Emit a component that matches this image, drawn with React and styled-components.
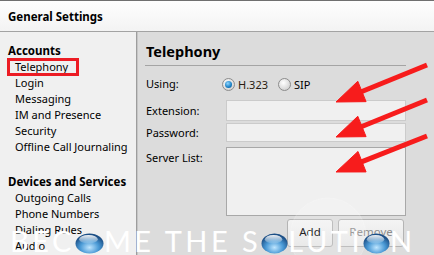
import React from 'react'
import styled, { createGlobalStyle } from 'styled-components'

const GlobalStyle = createGlobalStyle`
  html, body {
    margin: 0;
    padding: 0;
    background: #f0f0f0;
    overflow: hidden;
  }
  body {
    font-family: "Noto Sans", "Open Sans", sans-serif;
    font-size: 11px;
    color: #000;
  }
`

const Window = styled.div`
  position: relative;
  width: 434px;
  height: 255px;
  overflow: hidden;
  display: flex;
  flex-direction: column;
  background: #f0f0f0;
`

const TitleBar = styled.div`
  height: 30px;
  flex-shrink: 0;
  border-top: 1px solid #707070;
  border-bottom: 1px solid #a3a3a3;
  background: linear-gradient(#fefefe, #f3f3f3);
  display: flex;
  align-items: center;
  padding-left: 8px;
  font-weight: bold;
  font-size: 11.5px;
`

const Body = styled.div`
  flex: 1;
  display: flex;
  min-height: 0;
`

const Sidebar = styled.div`
  width: 136px;
  flex-shrink: 0;
  background: #f0f0f0;
  border-right: 1px solid #9d9d9d;
  padding-top: 11px;
  display: flex;
  flex-direction: column;
  gap: 19px;
`

const Group = styled.div`
  display: flex;
  flex-direction: column;
`

const GroupTitle = styled.div`
  font-weight: bold;
  font-size: 11.5px;
  line-height: 16px;
  padding-left: 8px;
`

const NavItem = styled.div`
  position: relative;
  line-height: 16px;
  padding-left: 15px;
  white-space: nowrap;
  ${({ $marked }) => $marked && `
    &::after {
      content: '';
      position: absolute;
      left: 7px;
      top: -1px;
      width: 66px;
      height: 12px;
      border: 3px solid #ec1c24;
    }
  `}
`

const Panel = styled.div`
  flex: 1;
  background: #dcdcdc;
  border-left: 1px solid #c6c6c6;
  padding-left: 7px;
`

const PanelHeader = styled.div`
  padding-top: 9px;
  height: 24px;
  line-height: 20px;
  font-size: 14.5px;
  font-weight: bold;
  padding-left: 1px;
  border-bottom: 1px solid #a4a4a4;
  width: 260px;
`

const Form = styled.div`
  display: grid;
  grid-template-columns: 80px 180px;
  padding-left: 1px;
  margin-top: 8px;
`

const Label = styled.div`
  line-height: 16px;
  margin-top: ${({ $mt }) => $mt || 0}px;
  align-self: ${({ $top }) => ($top ? 'start' : 'center')};
  padding-top: ${({ $pt }) => $pt || 0}px;
`

const RadioRow = styled.div`
  height: 20px;
  margin-left: -4px;
  display: flex;
  align-items: center;
  gap: 3px;
`

const RadioLabel = styled.span`
  margin-right: 7px;
  color: ${({ $dark }) => ($dark ? '#2a1c10' : '#000')};
`

const Radio = styled.span`
  width: 11px;
  height: 11px;
  border-radius: 50%;
  border: 1px solid #8c8c8c;
  background: radial-gradient(circle at 40% 35%, #ffffff, #d6d6d6 70%, #c4c4c4);
  display: inline-flex;
  align-items: center;
  justify-content: center;
  &::after {
    content: '';
    display: ${({ $checked }) => ($checked ? 'block' : 'none')};
    width: 7px;
    height: 7px;
    border-radius: 50%;
    background: radial-gradient(circle at 40% 35%, #8fd6ff, #1a7fc4 60%, #0d4f86);
  }
`

const Input = styled.div`
  height: ${({ $h }) => $h}px;
  margin-top: ${({ $mt }) => $mt || 0}px;
  box-sizing: border-box;
  background: #f0f0f0;
  border: 1px solid ${({ $dark }) => ($dark ? '#a8a8a8' : '#cbcbcb')};
`

const Buttons = styled.div`
  grid-column: 2;
  display: flex;
  justify-content: flex-end;
  gap: 5px;
  margin-top: 3px;
  padding-right: 2px;
`

const Button = styled.div`
  width: ${({ $w }) => $w}px;
  height: 28px;
  box-sizing: border-box;
  border: 1px solid #b4b4b4;
  border-radius: 3px;
  background: linear-gradient(#f4f4f4, #e6e6e6);
  display: flex;
  justify-content: center;
  padding-top: 4px;
  font-size: 11.5px;
  color: ${({ $disabled }) => ($disabled ? '#8d8d8d' : '#000')};
`

const Overlay = styled.svg`
  position: absolute;
  left: 0;
  top: 0;
  pointer-events: none;
`

const Watermark = styled.div`
  position: absolute;
  left: 10px;
  top: 226px;
  font-family: Lato, "DejaVu Sans", sans-serif;
  font-weight: 400;
  font-size: 29px;
  line-height: 29px;
  letter-spacing: 3.5px;
  color: #ffffff;
  white-space: pre;
  pointer-events: none;
  svg {
    vertical-align: -2px;
  }
`

const Bubble = ({ w = 27 }) => (
  <svg width={w} height="21" viewBox="0 0 28 22" preserveAspectRatio="none">
    <defs>
      <radialGradient id="bub" cx="50%" cy="70%" r="60%">
        <stop offset="0" stopColor="#bfe6ff" />
        <stop offset="0.55" stopColor="#4a9ad6" />
        <stop offset="1" stopColor="#1c4f86" />
      </radialGradient>
      <linearGradient id="gloss" x1="0" y1="0" x2="0" y2="1">
        <stop offset="0" stopColor="#ffffff" stopOpacity="0.95" />
        <stop offset="1" stopColor="#ffffff" stopOpacity="0.1" />
      </linearGradient>
    </defs>
    <ellipse cx="14" cy="11" rx="13.5" ry="10.5" fill="url(#bub)" />
    <ellipse cx="13" cy="6.5" rx="9" ry="4.5" fill="url(#gloss)" />
  </svg>
)

const Arrow = ({ x1, y1, x2, y2 }) => {
  const dx = x2 - x1
  const dy = y2 - y1
  const len = Math.hypot(dx, dy)
  const ux = dx / len
  const uy = dy / len
  const bx = x2 - ux * 28
  const by = y2 - uy * 28
  const px = -uy * 11
  const py = ux * 11
  return (
    <g fill="#f71c1c" stroke="#f71c1c">
      <line x1={x1} y1={y1} x2={bx + ux * 4} y2={by + uy * 4} strokeWidth="5" />
      <polygon points={`${x2},${y2} ${bx + px},${by + py} ${bx - px},${by - py}`} strokeWidth="1" strokeLinejoin="round" />
    </g>
  )
}

const App = () => {
  return (
    <>
      <GlobalStyle />
      <Window>
        <TitleBar>General Settings</TitleBar>
        <Body>
          <Sidebar>
            <Group>
              <GroupTitle>Accounts</GroupTitle>
              <NavItem $marked>Telephony</NavItem>
              <NavItem>Login</NavItem>
              <NavItem>Messaging</NavItem>
              <NavItem>IM and Presence</NavItem>
              <NavItem>Security</NavItem>
              <NavItem>Offline Call Journaling</NavItem>
            </Group>
            <Group>
              <GroupTitle>Devices and Services</GroupTitle>
              <NavItem>Outgoing Calls</NavItem>
              <NavItem>Phone Numbers</NavItem>
              <NavItem>Dialing Rules</NavItem>
              <NavItem>Audio</NavItem>
            </Group>
          </Sidebar>
          <Panel>
            <PanelHeader>Telephony</PanelHeader>
            <Form>
              <Label>Using:</Label>
              <RadioRow>
                <Radio $checked />
                <RadioLabel $dark>H.323</RadioLabel>
                <Radio />
                <RadioLabel>SIP</RadioLabel>
              </RadioRow>
              <Label $mt={6}>Extension:</Label>
              <Input $h={21} $mt={6} />
              <Label $mt={2}>Password:</Label>
              <Input $h={19} $mt={2} />
              <Label $mt={5} $top $pt={3}>Server List:</Label>
              <Input $h={69} $mt={5} $dark />
              <Buttons>
                <Button $w={46}>Add</Button>
                <Button $w={66} $disabled>Remove</Button>
              </Buttons>
            </Form>
          </Panel>
        </Body>

        <Overlay width="434" height="255">
          <circle cx="328" cy="236" r="38" fill="#ffffff" fillOpacity="0.14" stroke="#ffffff" strokeOpacity="0.2" />
          <Arrow x1={427} y1={65} x2={336} y2={102} />
          <Arrow x1={427} y1={100} x2={336} y2={137} />
          <Arrow x1={427} y1={136} x2={336} y2={172} />
        </Overlay>

        <Watermark>
          BEC<Bubble w={29} />ME THE S<Bubble />LUTI<Bubble />N
        </Watermark>
      </Window>
    </>
  )
}

export default App
